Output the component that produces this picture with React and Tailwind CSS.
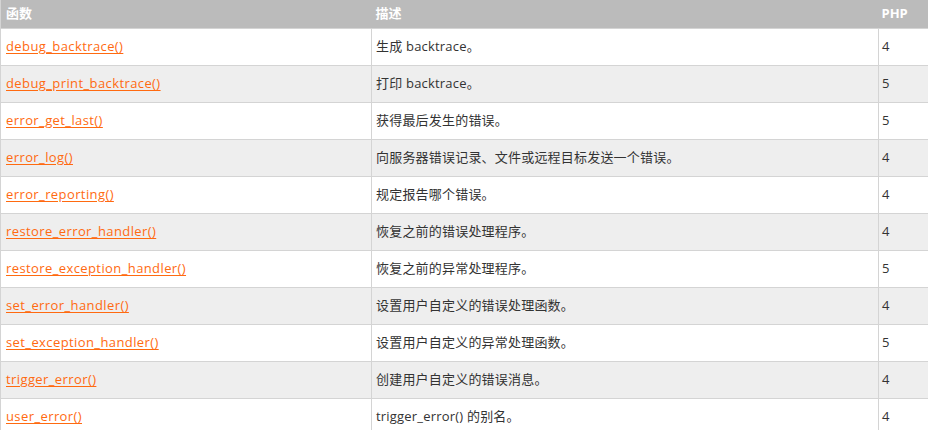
import React from 'react';

const rows = [
    ["debug_backtrace()", "生成 backtrace。", "4"],
    ["debug_print_backtrace()", "打印 backtrace。", "5"],
    ["error_get_last()", "获得最后发生的错误。", "5"],
    ["error_log()", "向服务器错误记录、文件或远程目标发送一个错误。", "4"],
    ["error_reporting()", "规定报告哪个错误。", "4"],
    ["restore_error_handler()", "恢复之前的错误处理程序。", "4"],
    ["restore_exception_handler()", "恢复之前的异常处理程序。", "5"],
    ["set_error_handler()", "设置用户自定义的错误处理函数。", "4"],
    ["set_exception_handler()", "设置用户自定义的异常处理函数。", "5"],
    ["trigger_error()", "创建用户自定义的错误消息。", "4"],
    ["user_error()", "trigger_error() 的别名。", "4"],
];

export default function App() {
    return (
        <div className="w-[928px] h-[430px] overflow-hidden bg-white" style={{ fontFamily: '"Open Sans", "Noto Sans CJK SC", sans-serif' }}>
            <table className="w-[940px] table-fixed border-collapse text-[13px] text-[#333]">
                <colgroup>
                    <col className="w-[371px]" />
                    <col className="w-[507px]" />
                    <col />
                </colgroup>
                <thead>
                    <tr className="bg-[#bbbbbb] h-[28px]">
                        <th className="text-left font-bold text-white px-[5px] border-l border-[#d4d4d4]">函数</th>
                        <th className="text-left font-bold text-white px-[4px]">描述</th>
                        <th className="text-left font-bold text-white px-[3px]">PHP</th>
                    </tr>
                </thead>
                <tbody>
                    {rows.map(([fn, desc, ver], i) => (
                        <tr key={fn} className={`h-[37px] ${i % 2 ? "bg-[#eeeeee]" : "bg-white"}`}>
                            <td className="border border-[#d4d4d4] px-[5px]">
                                <a href="#" className="text-[#ff6a10] underline underline-offset-2 tracking-[0.4px]">{fn}</a>
                            </td>
                            <td className="border border-[#d4d4d4] px-[4px] tracking-[0.2px]">{desc}</td>
                            <td className="border border-[#d4d4d4] px-[3px]">{ver}</td>
                        </tr>
                    ))}
                </tbody>
            </table>
        </div>
    );
}
